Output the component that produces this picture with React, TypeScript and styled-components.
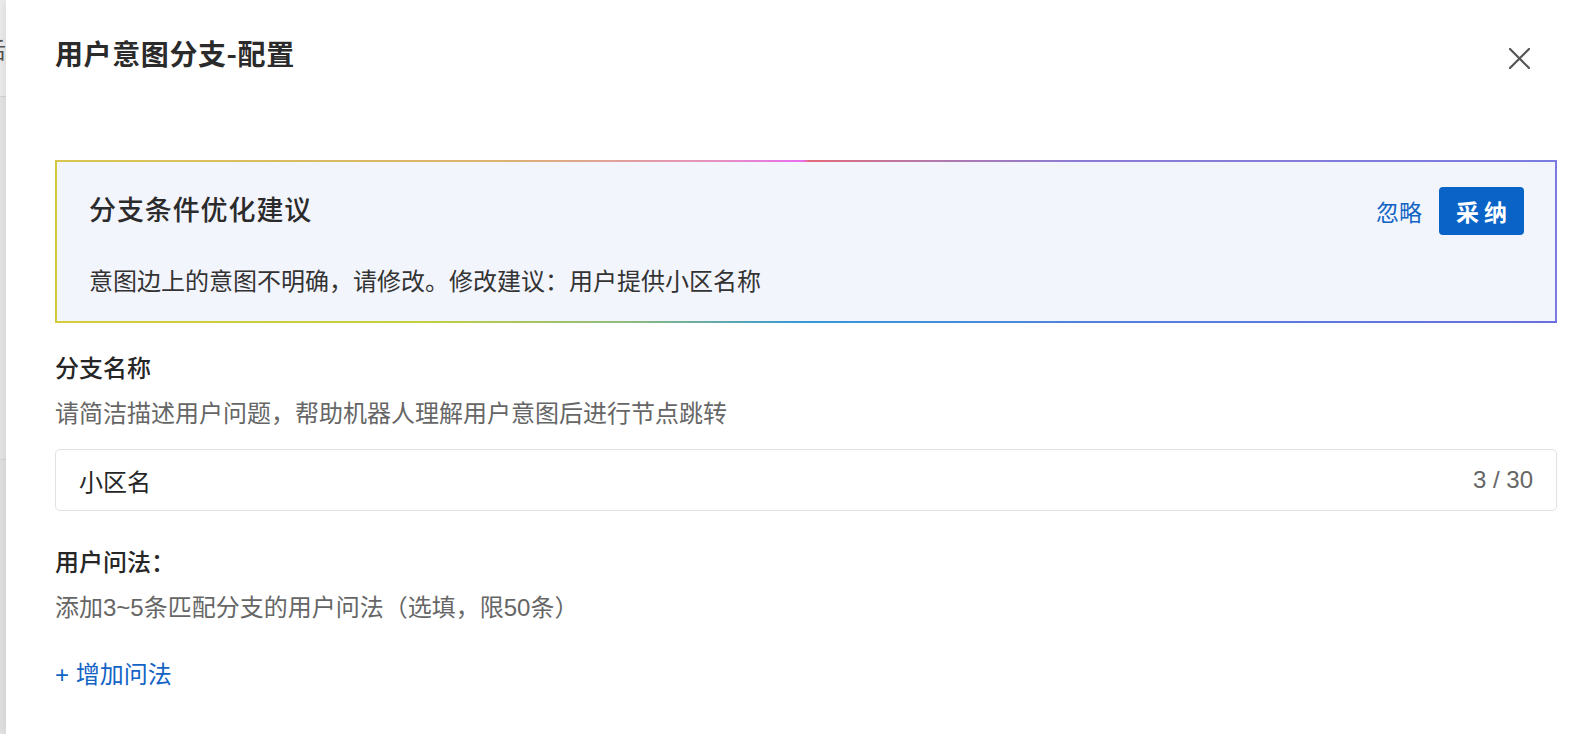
import React, { FunctionComponent, useState } from 'react';
import styled, { createGlobalStyle } from 'styled-components';

const GlobalStyle = createGlobalStyle`
  html, body {
    margin: 0;
    padding: 0;
    background: #ffffff;
    font-family: "Liberation Sans", "Noto Sans CJK SC", sans-serif;
  }
`;

const Page = styled.div`
  display: flex;
  flex-direction: row;
  width: 1592px;
  height: 734px;
  overflow: hidden;
`;

const BackdropStrip = styled.div`
  width: 6px;
  flex-shrink: 0;
  display: flex;
  flex-direction: column;
  overflow: hidden;
  background: #e6e6e6;
`;

const BackdropRow = styled.div<{ $h: number; $bg: string }>`
  height: ${(p) => p.$h}px;
  flex-shrink: 0;
  background: ${(p) => p.$bg};
  border-bottom: 1px solid #d8d8d8;
  display: flex;
  align-items: center;
  justify-content: flex-end;
  font-family: "Noto Sans CJK SC", sans-serif;
  font-size: 22px;
  color: #555;
  white-space: nowrap;
`;

const Drawer = styled.div`
  flex: 1;
  display: flex;
  flex-direction: column;
  padding: 33px 35px 0 49px;
  background: #ffffff;
  box-shadow: -4px 0 10px rgba(0, 0, 0, 0.08);
  z-index: 1;
`;

const Header = styled.div`
  display: flex;
  align-items: center;
  justify-content: space-between;
  height: 40px;
`;

const Title = styled.div`
  font-family: "Noto Sans CJK SC", sans-serif;
  font-size: 28px;
  font-weight: 700;
  letter-spacing: 0.6px;
  color: #2b2b2b;
  line-height: 40px;
`;

const CloseButton = styled.button`
  border: none;
  background: transparent;
  padding: 0;
  margin: 0 27px 0 0;
  width: 22px;
  height: 22px;
  display: flex;
  align-items: center;
  justify-content: center;
  cursor: pointer;
  position: relative;
  top: 5px;
`;

const SuggestionCard = styled.div`
  margin-top: 87px;
  padding: 2px;
  background:
    linear-gradient(90deg, #d8c650 0%, #dcb270 30%, #e690c0 44%, #e86ef0 49.8%, #e36a7a 50.2%, #b578a8 58%, #8c7bd4 68%, #7b7be0 100%) top left / 100% 2px no-repeat,
    linear-gradient(90deg, #d4cc3c 0%, #c4d040 24%, #8fbb7c 38%, #3598d8 50%, #5280e0 70%, #6a6ee0 100%) bottom left / 100% 2px no-repeat,
    linear-gradient(#d2ca3a, #d2ca3a) left top / 2px 100% no-repeat,
    linear-gradient(#7b78e0, #7b78e0) right top / 2px 100% no-repeat;
`;

const SuggestionInner = styled.div`
  background: #f3f5fd;
  padding: 25px 31px 23px 32px;
  display: flex;
  flex-direction: column;
`;

const SuggestionHeader = styled.div`
  display: flex;
  align-items: center;
  justify-content: space-between;
  height: 48px;
`;

const SuggestionTitle = styled.div`
  font-family: "Noto Sans CJK SC", sans-serif;
  font-size: 27px;
  font-weight: 500;
  letter-spacing: 0.9px;
  color: #2b2b2b;
  margin-top: -6px;
`;

const Actions = styled.div`
  display: flex;
  align-items: center;
  gap: 17px;
`;

const LinkButton = styled.button`
  border: none;
  background: transparent;
  padding: 0;
  font-family: "Noto Sans CJK SC", sans-serif;
  font-size: 23px;
  color: #1264c4;
  cursor: pointer;
`;

const PrimaryButton = styled.button`
  border: none;
  border-radius: 4px;
  background: #0a64c8;
  color: #ffffff;
  height: 48px;
  padding: 0 17px 0 17px;
  font-family: "Noto Sans CJK SC", sans-serif;
  font-size: 23px;
  font-weight: 700;
  letter-spacing: 5px;
  cursor: pointer;
  display: flex;
  align-items: center;
  & span {
    margin-right: -5px;
  }
`;

const SuggestionBody = styled.div`
  margin-top: 27px;
  font-family: "Noto Sans CJK SC", sans-serif;
  font-size: 24px;
  line-height: 36px;
  color: #333333;
`;

const Field = styled.div`
  display: flex;
  flex-direction: column;
`;

const FieldLabel = styled.div<{ $top: number }>`
  margin-top: ${(p) => p.$top}px;
  font-family: "Noto Sans CJK SC", sans-serif;
  font-size: 24px;
  font-weight: 500;
  line-height: 36px;
  color: #262626;
`;

const FieldHelp = styled.div`
  margin-top: 11px;
  font-family: "Liberation Sans", "Noto Sans CJK SC", sans-serif;
  font-size: 24px;
  line-height: 36px;
  color: #666666;
`;

const InputBox = styled.div`
  margin-top: 17px;
  height: 62px;
  box-sizing: border-box;
  border: 1.5px solid #e2e2e2;
  border-radius: 5px;
  display: flex;
  align-items: center;
  padding: 0 23px 0 23px;
  background: #ffffff;
`;

const TextInput = styled.input`
  flex: 1;
  border: none;
  outline: none;
  background: transparent;
  padding: 0;
  font-family: "Noto Sans CJK SC", sans-serif;
  font-size: 24px;
  color: #262626;
`;

const Counter = styled.span`
  font-family: "Liberation Sans", "Noto Sans CJK SC", sans-serif;
  font-size: 24px;
  color: #666666;
`;

const AddLink = styled.button`
  align-self: flex-start;
  margin-top: 31px;
  border: none;
  background: transparent;
  padding: 0;
  font-family: "Liberation Sans", "Noto Sans CJK SC", sans-serif;
  font-size: 24px;
  line-height: 36px;
  color: #1264c4;
  cursor: pointer;
`;

const App: FunctionComponent = () => {
  const [name, setName] = useState<string>('小区名');

  return (
    <Page>
      <GlobalStyle />
      <BackdropStrip>
        <BackdropRow $h={96} $bg="#efefef">后</BackdropRow>
        <BackdropRow $h={362} $bg="#e8e8e8" />
        <BackdropRow $h={276} $bg="#e4e4e4" />
      </BackdropStrip>
      <Drawer>
        <Header>
          <Title>用户意图分支-配置</Title>
          <CloseButton aria-label="关闭">
            <svg width="21" height="21" viewBox="0 0 21 21">
              <path d="M1 1 L20 20 M20 1 L1 20" stroke="#555555" strokeWidth="2.2" strokeLinecap="round" />
            </svg>
          </CloseButton>
        </Header>

        <SuggestionCard>
          <SuggestionInner>
            <SuggestionHeader>
              <SuggestionTitle>分支条件优化建议</SuggestionTitle>
              <Actions>
                <LinkButton>忽略</LinkButton>
                <PrimaryButton><span>采纳</span></PrimaryButton>
              </Actions>
            </SuggestionHeader>
            <SuggestionBody>意图边上的意图不明确，请修改。修改建议：用户提供小区名称</SuggestionBody>
          </SuggestionInner>
        </SuggestionCard>

        <Field>
          <FieldLabel $top={26}>分支名称</FieldLabel>
          <FieldHelp>请简洁描述用户问题，帮助机器人理解用户意图后进行节点跳转</FieldHelp>
          <InputBox>
            <TextInput value={name} maxLength={30} onChange={(e) => setName(e.target.value)} />
            <Counter>{name.length} / 30</Counter>
          </InputBox>
        </Field>

        <Field>
          <FieldLabel $top={32}>用户问法：</FieldLabel>
          <FieldHelp>添加3~5条匹配分支的用户问法（选填，限50条）</FieldHelp>
          <AddLink>+ 增加问法</AddLink>
        </Field>
      </Drawer>
    </Page>
  );
};

export default App;
